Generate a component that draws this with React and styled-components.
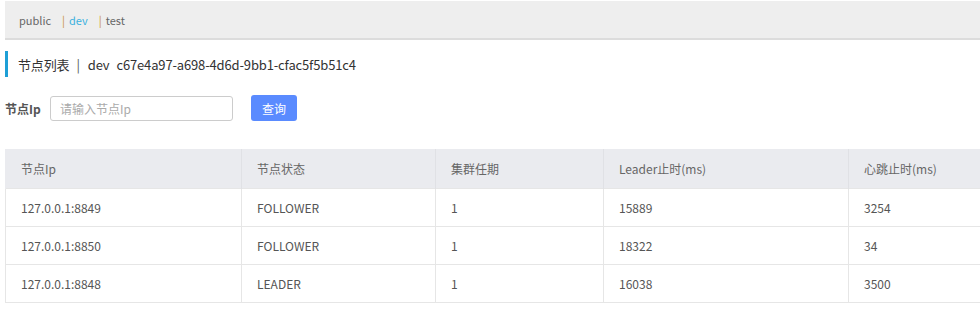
import React from "react";
import styled, { createGlobalStyle } from "styled-components";

const GlobalStyle = createGlobalStyle`
  html, body {
    margin: 0;
    padding: 0;
    background: #fff;
    overflow: hidden;
  }
  body {
    font-family: "Noto Sans CJK SC", "Noto Sans", sans-serif;
    color: #333;
  }
`;

const Page = styled.div`
  padding: 1px 0 0 5px;
  width: 975px;
  overflow: hidden;
`;

const TabBar = styled.div`
  display: flex;
  align-items: center;
  height: 37px;
  padding-left: 14px;
  background: #eeeeee;
  border-bottom: 2px solid #dcdcdc;
  font-size: 11px;
`;

const Tab = styled.span`
  margin-right: 11px;
  color: ${(p) => (p.$active ? "#3bb1de" : "#666")};
  cursor: pointer;
`;

const Sep = styled.span`
  color: #c8913b;
  margin-right: 4px;
`;

const Title = styled.div`
  display: flex;
  align-items: center;
  margin-top: 11px;
  height: 26px;
  border-left: 3px solid #1e9fd6;
  padding: 1px 0 0 10px;
  box-sizing: border-box;
  font-size: 13px;
  letter-spacing: -0.15px;
  color: #333;
`;

const TitleDivider = styled.span`
  margin: 0 8px 0 7px;
  color: #555;
`;

const ClusterId = styled.span`
  margin-left: 7px;
`;

const SearchRow = styled.div`
  display: flex;
  align-items: center;
  margin-top: 18px;
  height: 26px;
`;

const Label = styled.label`
  font-size: 12px;
  font-weight: 700;
  color: #555;
  width: 45px;
`;

const Input = styled.input`
  box-sizing: border-box;
  width: 183px;
  height: 25px;
  border: 1px solid #ccc;
  border-radius: 3px;
  padding: 0 9px;
  font-family: inherit;
  font-size: 12px;
  outline: none;
  &::placeholder {
    color: #aaa;
  }
`;

const Button = styled.button`
  margin-left: 18px;
  width: 46px;
  height: 26px;
  border: 0;
  border-radius: 3px;
  background: #5a8bff;
  color: #fff;
  font-family: inherit;
  font-size: 12px;
  cursor: pointer;
`;

const Table = styled.table`
  margin-top: 28px;
  border-collapse: collapse;
  table-layout: fixed;
  width: 1043px;
  font-size: 12px;
`;

const Th = styled.th`
  height: 39px;
  padding: 0 0 0 15px;
  text-align: left;
  font-weight: 400;
  color: #666;
  background: #eaebef;
  white-space: nowrap;
  border-left: 1px solid #e0e1e5;
  &:first-child {
    border-left: 1px solid #eaebef;
  }
`;

const Td = styled.td`
  height: 37px;
  padding: 0 0 0 15px;
  color: #555;
  white-space: nowrap;
  border-left: 1px solid #e6e6e6;
  border-bottom: 1px solid #e6e6e6;
  border-top: 1px solid #e6e6e6;
`;

const columns = [
  { title: "节点Ip", w: 236 },
  { title: "节点状态", w: 194 },
  { title: "集群任期", w: 168 },
  { title: "Leader止时(ms)", w: 245 },
  { title: "心跳止时(ms)", w: 200 },
];

const rows = [
  ["127.0.0.1:8849", "FOLLOWER", "1", "15889", "3254"],
  ["127.0.0.1:8850", "FOLLOWER", "1", "18322", "34"],
  ["127.0.0.1:8848", "LEADER", "1", "16038", "3500"],
];

export default function App() {
  return (
    <Page>
      <GlobalStyle />
      <TabBar>
        <Tab>public</Tab>
        <Tab $active>
          <Sep>|</Sep>dev
        </Tab>
        <Tab>
          <Sep>|</Sep>test
        </Tab>
      </TabBar>
      <Title>
        节点列表
        <TitleDivider>|</TitleDivider>
        dev
        <ClusterId>c67e4a97-a698-4d6d-9bb1-cfac5f5b51c4</ClusterId>
      </Title>
      <SearchRow>
        <Label>节点Ip</Label>
        <Input placeholder="请输入节点Ip" />
        <Button>查询</Button>
      </SearchRow>
      <Table>
        <colgroup>
          {columns.map((c) => (
            <col key={c.title} style={{ width: c.w }} />
          ))}
        </colgroup>
        <thead>
          <tr>
            {columns.map((c) => (
              <Th key={c.title}>{c.title}</Th>
            ))}
          </tr>
        </thead>
        <tbody>
          {rows.map((r) => (
            <tr key={r[0]}>
              {r.map((v, i) => (
                <Td key={i}>{v}</Td>
              ))}
            </tr>
          ))}
        </tbody>
      </Table>
    </Page>
  );
}
